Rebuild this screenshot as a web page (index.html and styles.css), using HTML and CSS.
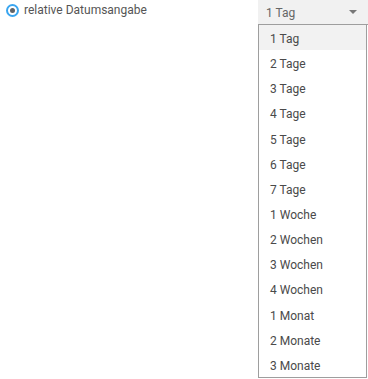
FILE: index.html
```html
<!DOCTYPE html>
<html lang="de">
<head>
<meta charset="utf-8">
<link rel="stylesheet" href="styles.css">
</head>
<body>
<div class="page">
  <label class="radio">
    <span class="radio-ring"><span class="radio-dot"></span></span>
    <span class="radio-label">relative Datumsangabe</span>
  </label>
  <div class="select">
    <div class="select-head">
      <span class="select-value">1 Tag</span>
      <span class="select-arrow"></span>
    </div>
    <ul class="select-list">
      <li class="option active">1 Tag</li>
      <li class="option">2 Tage</li>
      <li class="option">3 Tage</li>
      <li class="option">4 Tage</li>
      <li class="option">5 Tage</li>
      <li class="option">6 Tage</li>
      <li class="option">7 Tage</li>
      <li class="option">1 Woche</li>
      <li class="option">2 Wochen</li>
      <li class="option">3 Wochen</li>
      <li class="option">4 Wochen</li>
      <li class="option">1 Monat</li>
      <li class="option">2 Monate</li>
      <li class="option">3 Monate</li>
    </ul>
  </div>
</div>
</body>
</html>
```
FILE: styles.css
```css
html, body {
  margin: 0;
  padding: 0;
  background: #fff;
}
body {
  font-family: Roboto, "Liberation Sans", sans-serif;
  color: #555;
}
.page {
  display: flex;
  justify-content: space-between;
  align-items: flex-start;
  width: 368px;
  height: 379px;
  overflow: hidden;
}
.radio {
  display: flex;
  align-items: center;
  gap: 5px;
  padding: 3px 0 0 6px;
}
.radio-ring {
  box-sizing: border-box;
  width: 13px;
  height: 13px;
  border: 2px solid #3aa6f0;
  border-radius: 50%;
  display: flex;
  align-items: center;
  justify-content: center;
}
.radio-dot {
  width: 5px;
  height: 5px;
  border-radius: 50%;
  background: #5f6368;
}
.radio-label {
  font-size: 12px;
  color: #555;
  line-height: 14px;
}
.select {
  width: 110px;
  display: flex;
  flex-direction: column;
}
.select-head {
  height: 24px;
  background: #f1f1f1;
  border-bottom: 1px solid #9e9e9e;
  display: flex;
  align-items: center;
  justify-content: space-between;
  padding: 0 11px 0 8px;
}
.select-value {
  font-size: 12px;
  color: #666;
  padding-top: 1px;
}
.select-arrow {
  width: 0;
  height: 0;
  border-left: 4px solid transparent;
  border-right: 4px solid transparent;
  border-top: 4px solid #777;
}
.select-list {
  list-style: none;
  margin: 0;
  padding: 0;
  width: 109px;
  box-sizing: border-box;
  border: 1px solid #9e9e9e;
  border-top: none;
}
.option {
  box-sizing: border-box;
  height: 25.15px;
  padding: 3px 0 0 11px;
  line-height: 22.15px;
  font-size: 12px;
  color: #4a4a4a;
}
.option.active {
  background: #f2f2f2;
}
```
